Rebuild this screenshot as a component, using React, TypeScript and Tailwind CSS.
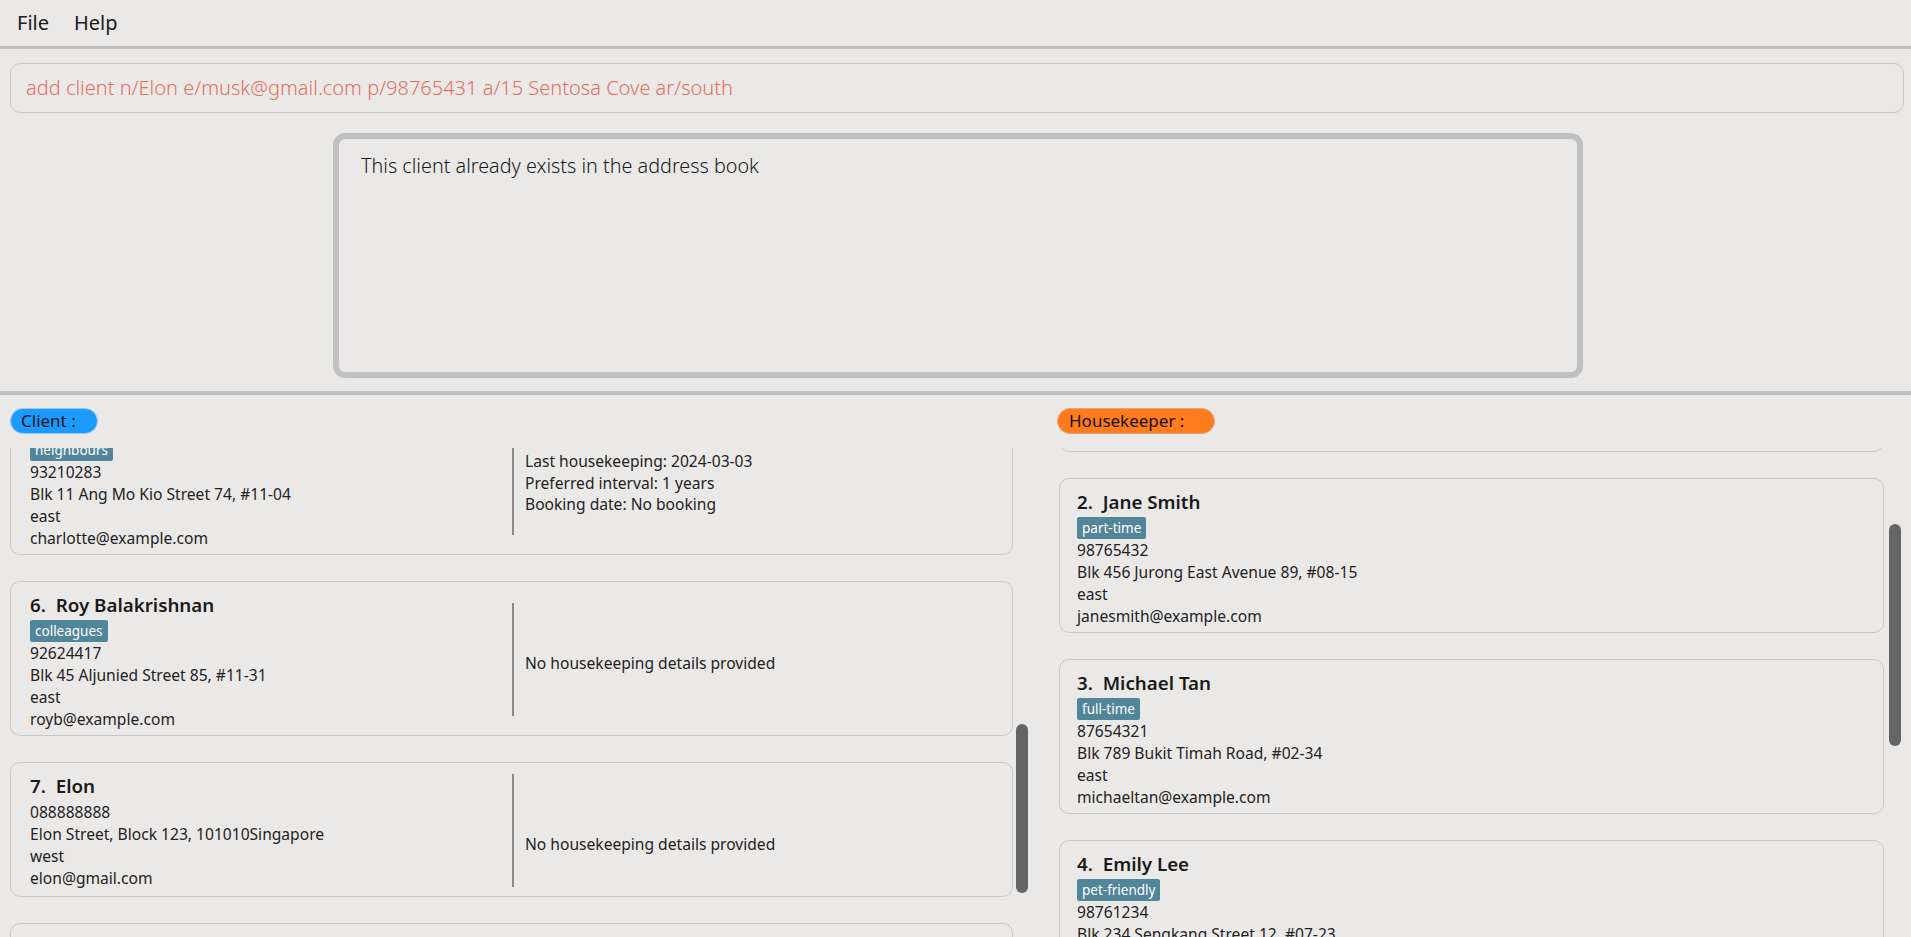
import React from "react";

type Person = {
  idx: number;
  name: string;
  tags: string[];
  phone: string;
  address: string;
  area: string;
  email: string;
};

type Client = Person & {
  details: string[];
  detailsPad: string;
};

const clients: Client[] = [
  {
    idx: 5,
    name: "Charlotte Oliveiro",
    tags: ["neighbours"],
    phone: "93210283",
    address: "Blk 11 Ang Mo Kio Street 74, #11-04",
    area: "east",
    email: "charlotte@example.com",
    details: [
      "Last housekeeping: 2024-03-03",
      "Preferred interval: 1 years",
      "Booking date: No booking",
    ],
    detailsPad: "pt-[39px] leading-[21.5px]",
  },
  {
    idx: 6,
    name: "Roy Balakrishnan",
    tags: ["colleagues"],
    phone: "92624417",
    address: "Blk 45 Aljunied Street 85, #11-31",
    area: "east",
    email: "royb@example.com",
    details: ["No housekeeping details provided"],
    detailsPad: "pt-[59px] leading-[22px]",
  },
  {
    idx: 7,
    name: "Elon",
    tags: [],
    phone: "088888888",
    address: "Elon Street, Block 123, 101010Singapore",
    area: "west",
    email: "elon@gmail.com",
    details: ["No housekeeping details provided"],
    detailsPad: "pt-[59px] leading-[22px]",
  },
  {
    idx: 8,
    name: "William Lim",
    tags: ["friends"],
    phone: "91234567",
    address: "Blk 12 Tampines Street 11, #03-10",
    area: "east",
    email: "william@example.com",
    details: ["No housekeeping details provided"],
    detailsPad: "pt-[59px] leading-[22px]",
  },
];

const housekeepers: Person[] = [
  {
    idx: 1,
    name: "John Doe",
    tags: ["full-time"],
    phone: "91234567",
    address: "Blk 123 Clementi Avenue 3, #05-12",
    area: "west",
    email: "johndoe@example.com",
  },
  {
    idx: 2,
    name: "Jane Smith",
    tags: ["part-time"],
    phone: "98765432",
    address: "Blk 456 Jurong East Avenue 89, #08-15",
    area: "east",
    email: "janesmith@example.com",
  },
  {
    idx: 3,
    name: "Michael Tan",
    tags: ["full-time"],
    phone: "87654321",
    address: "Blk 789 Bukit Timah Road, #02-34",
    area: "east",
    email: "michaeltan@example.com",
  },
  {
    idx: 4,
    name: "Emily Lee",
    tags: ["pet-friendly"],
    phone: "98761234",
    address: "Blk 234 Sengkang Street 12, #07-23",
    area: "east",
    email: "emilylee@example.com",
  },
];

function PersonInfo({ p }: { p: Person }) {
  return (
    <div>
      <div className="h-[24px] leading-[24px] mb-[3px] text-[18.75px] font-semibold text-[#1a1a1a] whitespace-pre">
        {p.idx}.  {p.name}
      </div>
      {p.tags.length > 0 && (
        <div className="flex gap-[4px]">
          {p.tags.map((t) => (
            <span
              key={t}
              className="h-[22px] leading-[22px] px-[5px] rounded-[2px] bg-[#50859a] text-white text-[13.5px]"
            >
              {t}
            </span>
          ))}
        </div>
      )}
      <div className="text-[15.6px] leading-[22px] text-[#222]">
        <div>{p.phone}</div>
        <div>{p.address}</div>
        <div>{p.area}</div>
        <div>{p.email}</div>
      </div>
    </div>
  );
}

function ClientCard({ c }: { c: Client }) {
  return (
    <div className="w-[1003px] shrink-0 flex rounded-[10px] border border-[#c8c8c8] pt-[11px] pb-[5px] pl-[19px]">
      <div className="w-[482px] shrink-0">
        <PersonInfo p={c} />
      </div>
      <div className="flex flex-1 items-start">
        <div className="w-[2px] h-[113px] mb-[4px] self-center bg-[#8a8a8a]" />
        <div className={`pl-[11px] text-[15.6px] text-[#222] ${c.detailsPad}`}>
          {c.details.map((d) => (
            <div key={d}>{d}</div>
          ))}
        </div>
      </div>
    </div>
  );
}

function HousekeeperCard({ h }: { h: Person }) {
  return (
    <div className="w-[825px] shrink-0 rounded-[10px] border border-[#c8c8c8] pt-[11px] pb-[5px] pl-[17px]">
      <PersonInfo p={h} />
    </div>
  );
}

export default function App() {
  return (
    <div className="w-[1911px] h-[937px] overflow-hidden bg-[#ebe9e7] text-[#222] font-['Noto_Sans',sans-serif]">
      {/* menu */}
      <div className="h-[46px] flex items-center pl-[17px] gap-[25px] text-[20px] text-[#1a1a1a]">
        <span>File</span>
        <span>Help</span>
      </div>
      <div className="h-[3px] bg-[#c0c0c0]" />

      {/* command box */}
      <div className="pt-[14px] pl-[10px] pr-[7px]">
        <div className="h-[50px] flex items-center pl-[15px] rounded-[10px] border border-[#c6c6c6] text-[20px] font-light text-[#e2705c]">
          add client n/Elon e/musk@gmail.com p/98765431 a/15 Sentosa Cove ar/south
        </div>
      </div>

      {/* result display */}
      <div className="pt-[20px] pl-[333px]">
        <div className="w-[1250px] h-[245px] rounded-[12px] border-[6px] border-[#c0c0c0] pt-[12px] pl-[22px] text-[19.8px] leading-[30px] font-light text-[#1a1a1a]">
          This client already exists in the address book
        </div>
      </div>

      <div className="mt-[13px] h-[4px] bg-[#c0c0c0]" />

      {/* lists */}
      <div className="flex">
        <div className="w-[1047px] shrink-0 pl-[10px]">
          <div className="mt-[13px] w-[88px] h-[26px] flex items-center pl-[10px] rounded-full bg-[#1b9bff] border border-[#9ccaf0] text-[17px] text-[#111]">
            Client :
          </div>
          <div className="mt-[14px] h-[489px] flex">
            <div className="w-[1003px] h-[489px] overflow-hidden">
              <div className="-mt-[48px] flex flex-col gap-[26px]">
                {clients.map((c) => (
                  <ClientCard key={c.idx} c={c} />
                ))}
              </div>
            </div>
            <div className="ml-[3px] pt-[276px]">
              <div className="w-[12px] h-[169px] rounded-[6px] bg-[#656565]" />
            </div>
          </div>
        </div>

        <div className="flex-1 pl-[10px]">
          <div className="mt-[13px] w-[158px] h-[26px] flex items-center pl-[11px] rounded-full bg-[#ff7b1c] border border-[#e0a77c] text-[17px] text-[#111]">
            Housekeeper :
          </div>
          <div className="mt-[14px] ml-[2px] h-[489px] flex">
            <div className="w-[825px] h-[489px] overflow-hidden">
              <div className="-mt-[151px] flex flex-col gap-[26px]">
                {housekeepers.map((h) => (
                  <HousekeeperCard key={h.idx} h={h} />
                ))}
              </div>
            </div>
            <div className="ml-[5px] pt-[76px]">
              <div className="w-[12px] h-[222px] rounded-[6px] bg-[#656565]" />
            </div>
          </div>
        </div>
      </div>
    </div>
  );
}
